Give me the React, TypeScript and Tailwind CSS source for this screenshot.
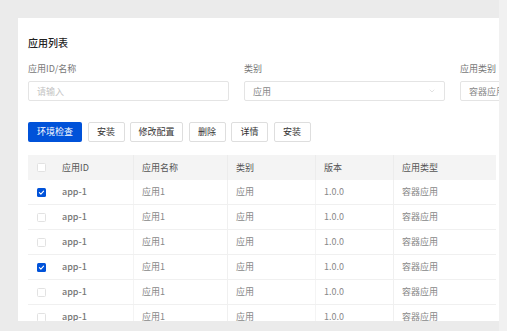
import { ChevronDown } from "lucide-react";

const cols = [
  { key: "id", label: "应用ID", w: "w-[79px]" },
  { key: "name", label: "应用名称", w: "w-[94px]" },
  { key: "cat", label: "类别", w: "w-[88px]" },
  { key: "ver", label: "版本", w: "w-[78px]" },
  { key: "type", label: "应用类型", w: "w-[103px]" },
];

const rows = [true, false, false, true, false, false].map((checked, i) => ({
  key: i,
  checked,
  id: "app-1",
  name: "应用1",
  cat: "应用",
  ver: "1.0.0",
  type: "容器应用",
}));

function Checkbox({ checked }: { checked?: boolean }) {
  if (checked) {
    return (
      <span className="flex h-[9px] w-[9px] items-center justify-center rounded-[1.5px] bg-[#0052d9]">
        <svg viewBox="0 0 10 10" className="h-[7px] w-[7px]" fill="none">
          <path d="M2 5.2 4.1 7.2 8 3" stroke="white" strokeWidth="1.6" strokeLinecap="round" strokeLinejoin="round" />
        </svg>
      </span>
    );
  }
  return <span className="block h-[9px] w-[9px] rounded-[1.5px] border border-[#e2e2e2] bg-white" />;
}

function Field({ label, children }: { label: string; children: React.ReactNode }) {
  return (
    <div className="w-[201px] shrink-0">
      <p className="text-[9px] leading-[12px] text-[#777]">{label}</p>
      <div className="mt-[6px] flex h-[20px] items-center justify-between rounded-[2px] border border-[#e4e4e4] bg-white pl-[8px] pr-[8px] text-[9px] leading-none">
        {children}
      </div>
    </div>
  );
}

const btn =
  "flex h-[20px] items-center justify-center rounded-[2px] border border-[#dedede] bg-white text-[9px] text-[#333]";

export default function App() {
  return (
    <div
      className="flex h-[331px] w-[507px] overflow-hidden bg-[#ebebeb]"
      style={{ fontFamily: '"Noto Sans CJK SC", "Noto Sans", sans-serif' }}
    >
      <div className="w-[499px] shrink-0 pl-[18px] pt-[18px]">
        <div className="h-[303px] w-[481px] overflow-hidden bg-white pl-[10px] pt-[18px]">
          <h1 className="text-[10px] font-medium leading-[14px] text-[#222]">应用列表</h1>

          <div className="mt-[13px] flex gap-[15px]">
            <Field label="应用ID/名称">
              <span className="text-[#c4c4c4]">请输入</span>
            </Field>
            <Field label="类别">
              <span className="text-[#888]">应用</span>
              <ChevronDown className="h-[8px] w-[8px] text-[#c4c4c4]" strokeWidth={1.5} />
            </Field>
            <Field label="应用类别">
              <span className="text-[#888]">容器应用</span>
            </Field>
          </div>

          <div className="mt-[21px] flex gap-[5.5px]">
            <button className="flex h-[20px] w-[54px] items-center justify-center rounded-[2px] bg-[#0052d9] text-[9px] text-white">
              环境检查
            </button>
            <button className={`${btn} w-[37px]`}>安装</button>
            <button className={`${btn} w-[53px]`}>修改配置</button>
            <button className={`${btn} w-[37px]`}>删除</button>
            <button className={`${btn} w-[37px]`}>详情</button>
            <button className={`${btn} w-[37px]`}>安装</button>
          </div>

          <div className="mt-[13px] w-[468px] text-[9px]">
            <div className="flex h-[25px] items-center bg-[#f4f4f4] text-[#555]">
              <div className="flex w-[26px] justify-end pr-[8px]">
                <Checkbox />
              </div>
              {cols.map((c, i) => (
                <div
                  key={c.key}
                  className={`${c.w} flex h-full items-center px-[8px] ${i > 0 ? "border-l border-[#ececec]" : ""}`}
                >
                  {c.label}
                </div>
              ))}
            </div>
            {rows.map((r) => (
              <div key={r.key} className="flex h-[25px] items-center border-b border-[#f0f0f0] text-[#888]">
                <div className="flex w-[26px] justify-end pr-[8px]">
                  <Checkbox checked={r.checked} />
                </div>
                <div className="flex h-full w-[79px] items-center px-[8px] font-medium text-[#777]">{r.id}</div>
                <div className="flex h-full w-[94px] items-center border-l border-[#f4f4f4] px-[8px]">{r.name}</div>
                <div className="flex h-full w-[88px] items-center border-l border-[#f0f0f0] px-[8px]">{r.cat}</div>
                <div className="flex h-full w-[78px] items-center border-l border-[#f4f4f4] px-[8px]">{r.ver}</div>
                <div className="flex h-full w-[103px] items-center border-l border-[#f0f0f0] px-[8px]">{r.type}</div>
              </div>
            ))}
          </div>
        </div>
      </div>
      <div className="h-full flex-1 bg-[#f1f1f1]" />
    </div>
  );
}
